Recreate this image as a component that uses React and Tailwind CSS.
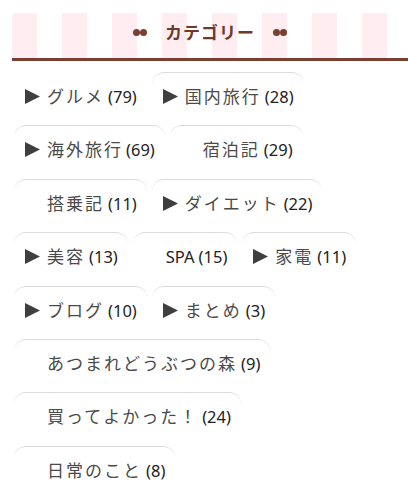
const rows = [
  [
    { name: "グルメ", count: 79, tri: true, bare: true },
    { name: "国内旅行", count: 28, tri: true },
  ],
  [
    { name: "海外旅行", count: 69, tri: true, tight: true },
    { name: "宿泊記", count: 29 },
  ],
  [
    { name: "搭乗記", count: 11 },
    { name: "ダイエット", count: 22, tri: true },
  ],
  [
    { name: "美容", count: 13, tri: true },
    { name: "SPA", count: 15, latin: true },
    { name: "家電", count: 11, tri: true },
  ],
  [
    { name: "ブログ", count: 10, tri: true },
    { name: "まとめ", count: 3, tri: true },
  ],
  [{ name: "あつまれどうぶつの森", count: 9 }],
  [{ name: "買ってよかった！", count: 24 }],
  [{ name: "日常のこと", count: 8 }],
]

function Triangle({ hidden }) {
  return (
    <svg
      width="15"
      height="15"
      viewBox="0 0 15 15"
      className={hidden ? "mr-[7px] shrink-0 opacity-0" : "mr-[7px] shrink-0"}
    >
      <path d="M0 0 L15 7.5 L0 15 Z" fill="#3f3f3f" />
    </svg>
  )
}

function Dots() {
  return (
    <span className="flex items-center">
      <span className="h-[7px] w-[7px] rounded-full bg-[#7a3f30]" />
      <span className="h-[7px] w-[7px] rounded-full bg-[#7a3f30]" />
    </span>
  )
}

function Pill({ item }) {
  const border = item.bare ? "border-transparent" : "border-[#dcdcdc]"
  return (
    <a
      className={`flex items-center rounded-[12px] border-t ${border} pl-[11px] pr-[10px] pt-[11px] pb-[12px] leading-[25px] text-[#4a4a4a]`}
    >
      <Triangle hidden={!item.tri} />
      {item.latin ? (
        <span className="text-[16.5px] text-[#222]">{item.name}</span>
      ) : (
        <span className="text-[17px] tracking-[2px]">{item.name}</span>
      )}
      <span className={`text-[16.5px] text-[#222] ${item.tight ? "ml-[3px]" : "ml-[4px]"}`}>
        ({item.count})
      </span>
    </a>
  )
}

export default function App() {
  return (
    <div
      className="min-h-screen bg-white pl-[12px] pt-[13px]"
      style={{ fontFamily: '"Noto Sans", "Noto Sans CJK JP", sans-serif' }}
    >
      <div className="flex h-[48px] items-center justify-center rounded-tl-[4px] border-b-[3px] border-[#7a3f30] bg-[repeating-linear-gradient(90deg,#ffedf2_0_25px,#ffffff_25px_50px)] pb-[6px]">
        <Dots />
        <span className="mx-[18px] text-[17px] font-bold tracking-[1px] text-[#6e3a2c]">
          カテゴリー
        </span>
        <Dots />
      </div>

      <div className="flex flex-col gap-[4.4px] pl-[2px] pt-[11px]">
        {rows.map((row, i) => (
          <div key={i} className="flex gap-[5px]">
            {row.map((item) => (
              <Pill key={item.name} item={item} />
            ))}
          </div>
        ))}
      </div>
    </div>
  )
}
